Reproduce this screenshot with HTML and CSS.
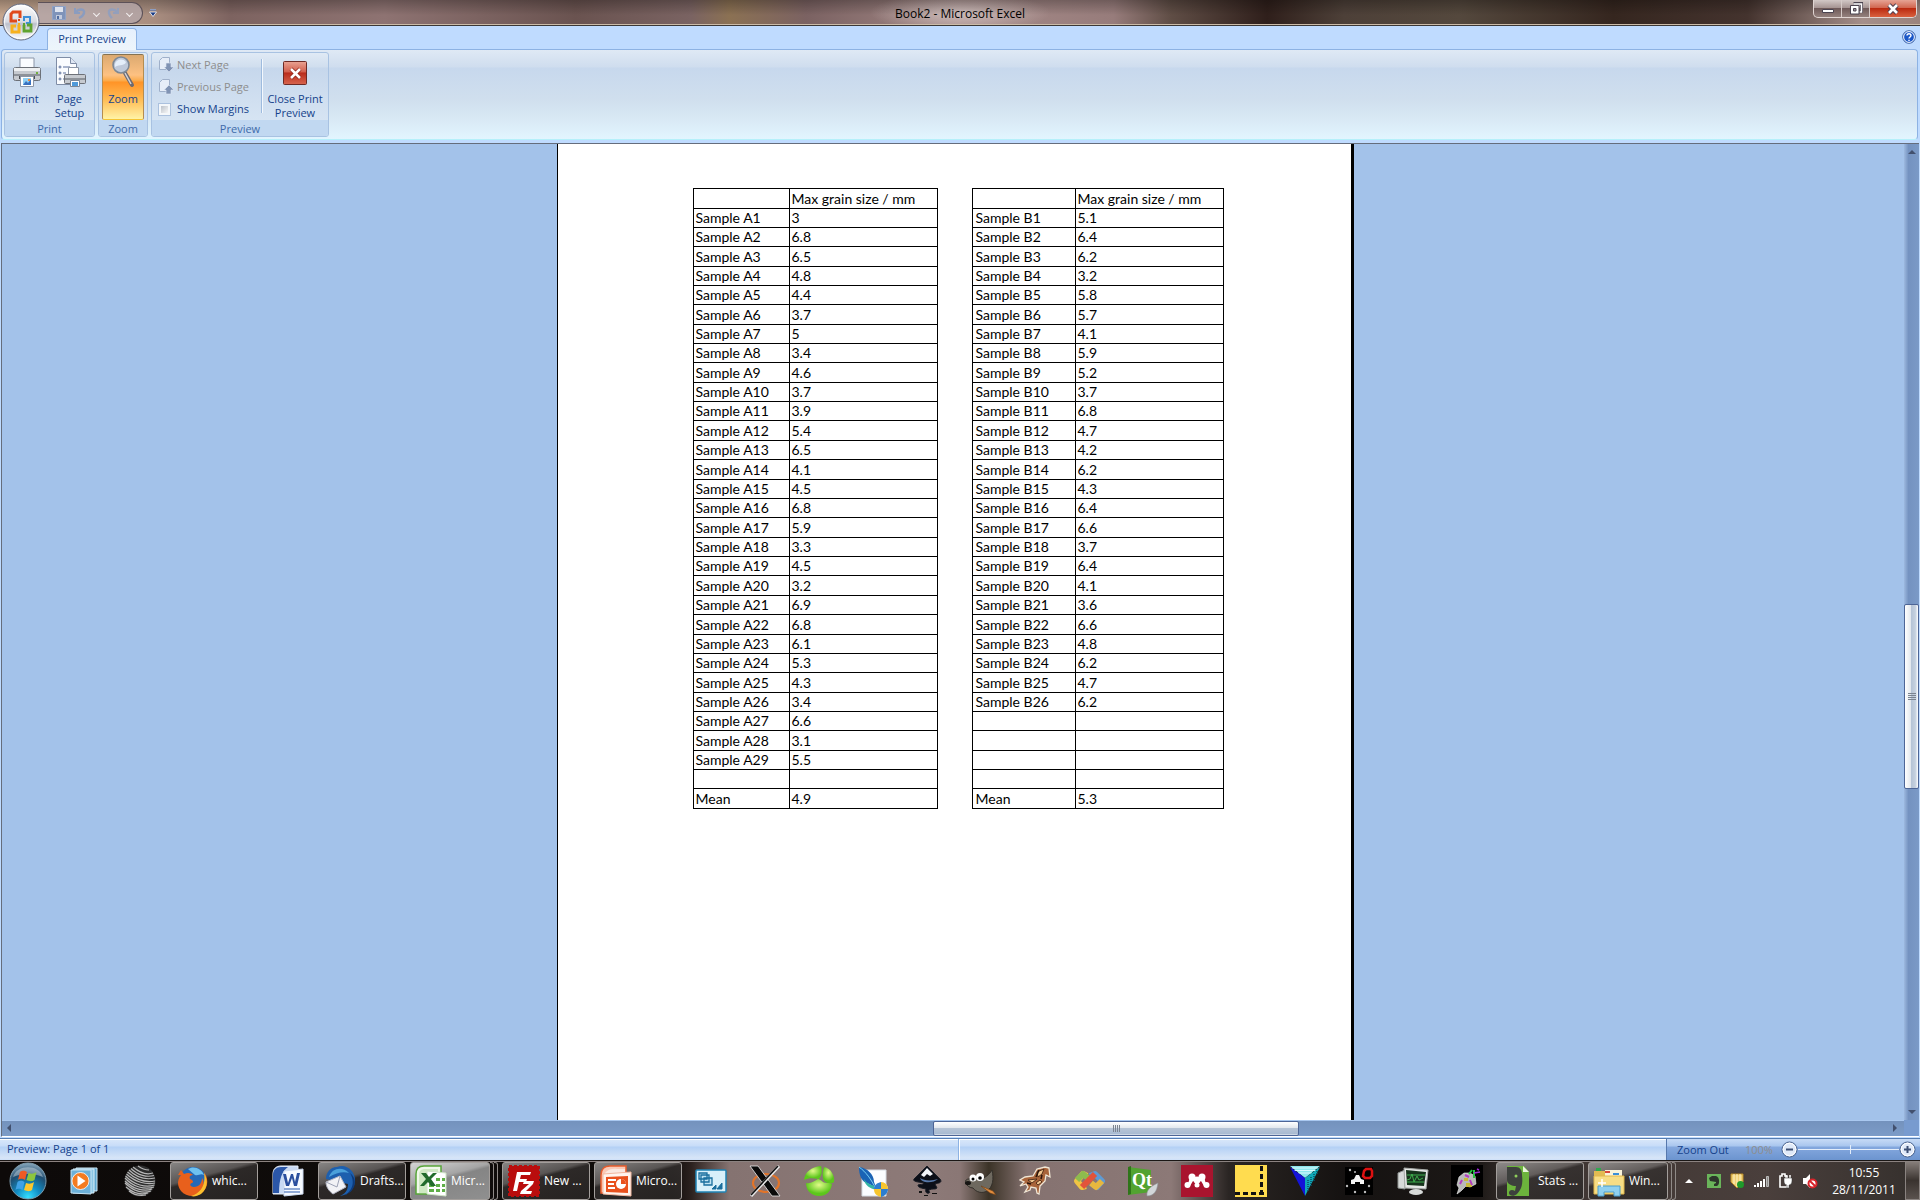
FILE: index.html
```html
<!DOCTYPE html>
<html lang="en">
<head>
<meta charset="utf-8">
<title>Book2 - Microsoft Excel</title>
<link rel="stylesheet" href="styles.css">
</head>
<body>
<header class="titlebar">
  <button class="office" aria-label="Office menu">
    <svg viewBox="0 0 38 38"><defs><linearGradient id="orb" x2="0" y2="1"><stop stop-color="#fff"/><stop offset=".5" stop-color="#d8dbe2"/><stop offset=".55" stop-color="#bcc0cc"/><stop offset="1" stop-color="#fff"/></linearGradient></defs>
    <circle cx="19" cy="19" r="18" fill="url(#orb)" stroke="#626a80"/><circle cx="19" cy="19" r="16.5" fill="none" stroke="#fff" opacity=".8"/>
    <g fill="none" stroke-width="3"><path d="M18 15V9h-7l-2 2v7h6" stroke="#e0481b"/><path d="M22 17v-3h6v6h-4" stroke="#3b8fd8" stroke-width="2"/><path d="M17 22v7h-7v-6h4" stroke="#f7b11d"/><path d="M22 22v6h7v-6h-4" stroke="#5fa32f" stroke-width="2.8"/></g>
    <path d="M16 16h2v2h-2z" fill="#e0481b"/><path d="M21 16h2v2h-2z" fill="#3b8fd8"/><path d="M16 20h2v2h-2z" fill="#f7b11d"/><path d="M21 20h2v2h-2z" fill="#5fa32f"/></svg>
  </button>
  <div class="quick">
    <button aria-label="Save"><svg width="14" height="14" viewBox="0 0 14 14"><path d="M.5.5h13v13h-13z" fill="#7f93b9" stroke="#8fa2c6"/><path d="M3 1h8v5H3z" fill="#dfe4ef"/><path d="M4 9h6v4H4z" fill="#c3cbdd"/><path d="M5 10h2v3H5z" fill="#536da0"/></svg></button>
    <button aria-label="Undo"><svg width="14" height="14" viewBox="0 0 14 14"><path d="M2 2v5h5" fill="none" stroke="#8b9cbf" stroke-width="2"/><path d="M3 6c3-4 9-3 8 1-.5 3-3 4-5 5" fill="none" stroke="#8b9cbf" stroke-width="2.4"/></svg></button>
    <span class="chev"></span>
    <button aria-label="Redo"><svg width="14" height="14" viewBox="0 0 14 14"><path d="M12 2v5H7" fill="none" stroke="#939fbc" stroke-width="2"/><path d="M11 6C8 2 2 3 3 7c.5 3 2 4 3 5" fill="none" stroke="#939fbc" stroke-width="2.4"/></svg></button>
    <span class="chev"></span>
  </div>
  <button class="customize" aria-label="Customize toolbar"><svg width="8" height="8" viewBox="0 0 8 8"><path d="M1 .5h6" stroke="#fff" stroke-width="2"/><path d="M1 1h6" stroke="#1d3f86"/><path d="M.5 3h7L4 7.5z" fill="#1d3f86" stroke="#fff" stroke-width=".8"/></svg></button>
  <h1>Book2 - Microsoft Excel</h1>
  <div class="winbtns">
    <button aria-label="Minimize"><svg width="14" height="12" viewBox="0 0 14 12"><path d="M1.500 6.500h11v3h-11z" fill="#fff" stroke="#4b4450"/></svg></button>
    <button aria-label="Restore"><svg width="14" height="14" viewBox="0 0 14 14"><path d="M4.500 1.500h8v8h-2" fill="none" stroke="#4b4450" stroke-width="3"/><path d="M4.500 2h8v8h-2" fill="none" stroke="#fff" stroke-width="1.500"/><path d="M1.500 3.500h8.500v8.500H1.500z" fill="#fff" stroke="#4b4450"/><path d="M4.500 6.500h2.500v2.500H4.500z" fill="#9a9096" stroke="#4b4450"/></svg></button>
    <button class="close" aria-label="Close"><svg width="14" height="12" viewBox="0 0 14 12"><path d="M3 2l8 8M11 2l-8 8" stroke="#514050" stroke-width="4.600"/><path d="M3 2l8 8M11 2l-8 8" stroke="#fff" stroke-width="2.600"/></svg></button>
  </div>
</header>

<nav class="tabs">
  <button class="tab">Print Preview</button>
  <button class="help" aria-label="Help"><svg width="14" height="14" viewBox="0 0 14 14"><circle cx="7" cy="7" r="6.300" fill="#1c58c8" stroke="#4b6ea8"/><circle cx="7" cy="7" r="5.400" fill="none" stroke="#fff"/><path d="M5 5.600c0-2.400 4-2.400 4 0C9 7 7 7 7 8.600M7 9.800v1.200" fill="none" stroke="#fff" stroke-width="1.400"/></svg></button>
</nav>

<section class="ribbon">
  <div class="group g-print">
    <div class="body">
      <button class="big"><svg width="32" height="32" viewBox="0 0 32 32"><path d="M9 2h14v12H9z" fill="#fafcff" stroke="#8b96a8"/><rect x="2.500" y="11.500" width="27" height="13" rx="2" fill="#c6cad0" stroke="#6d7178"/><path d="M3 12h26v3H3z" fill="#eef0f2"/><path d="M3 18h26v2H3z" fill="#8d9299"/><path d="M8 20h16v3H8z" fill="#4b4e54"/><path d="M9.500 20.500h13v10h-13z" fill="#fff" stroke="#8b96a8"/><path d="M12 22h8v7h-8z" fill="#8fd0f4"/><path d="M12 29l3-4 2 2 3-4v6z" fill="#3971c0"/><path d="M17 23h2v2h-2z" fill="#f08a3c"/><path d="M25 16h2v2h-2z" fill="#6fae3c"/></svg><span>Print</span></button>
      <button class="big"><svg width="32" height="32" viewBox="0 0 32 32"><path d="M2.500 1.500h14l6 6v21h-20z" fill="#fafcff" stroke="#7f8da6"/><path d="M16.500 1.500v6h6" fill="#dfe7f4" stroke="#7f8da6"/><g fill="none" stroke="#5a6f9c"><circle cx="6" cy="11" r="1"/><circle cx="6" cy="17" r="1"/><circle cx="6" cy="23" r="1"/><path d="M9 11h7M9 17h3M9 23h2"/></g><path d="M14.500 11.500h10v8h-10z" fill="#fff" stroke="#8b96a8"/><rect x="10.500" y="18.500" width="21" height="9" rx="1" fill="#c6cad0" stroke="#6d7178"/><path d="M11 22h20v2H11z" fill="#8d9299"/><path d="M16.500 24.500h9v6h-9z" fill="#fff" stroke="#7c8796"/><path d="M18 26h6v4h-6z" fill="#4f9ada"/></svg><span>Page<br>Setup</span></button>
    </div>
    <h2>Print</h2>
  </div>
  <div class="group g-zoom">
    <div class="body">
      <button class="big on"><svg width="32" height="32" viewBox="0 0 32 32"><path d="M18 17l7 12" stroke="#6e6a70" stroke-width="4" stroke-linecap="round"/><path d="M18 17l6 11" stroke="#d5d5da" stroke-width="1.500"/><circle cx="14" cy="9" r="8" fill="#b9cbe4" fill-opacity=".9" stroke="#7e8894" stroke-width="1.600"/><path d="M8 8c1-5 8-6 11-2-1 4-6 2-11 5z" fill="#e4eefa"/></svg><span>Zoom</span></button>
    </div>
    <h2>Zoom</h2>
  </div>
  <div class="group g-preview">
    <div class="body">
      <div class="stack">
        <button class="small" disabled><svg width="16" height="16" viewBox="0 0 16 16"><path d="M1.500 3.500l3-3h7v12h-10z" fill="#e6edf8" stroke="#9fb0ca"/><path d="M8 6h5v4h3l-5 5-5-5h2z" fill="#8093b4" stroke="#dfe8f5" stroke-width=".6"/></svg>Next Page</button>
        <button class="small" disabled><svg width="16" height="16" viewBox="0 0 16 16"><path d="M1.500 3.500l3-3h7v12h-10z" fill="#e6edf8" stroke="#9fb0ca"/><path d="M8 15h5v-4h3l-5-5-5 5h2z" fill="#8093b4" stroke="#dfe8f5" stroke-width=".6"/></svg>Previous Page</button>
        <label class="small"><input type="checkbox">Show Margins</label>
      </div>
      <button class="big closeprev"><svg width="32" height="32" viewBox="0 3 32 32"><defs><linearGradient id="red" x2="0" y2="1"><stop stop-color="#e9a393"/><stop offset=".45" stop-color="#d2604e"/><stop offset=".5" stop-color="#b92c1c"/><stop offset="1" stop-color="#d8654e"/></linearGradient></defs><rect x="4.500" y="5.500" width="23" height="23" rx="1" fill="url(#red)" stroke="#6d2a25"/><path d="M12 13l9 9M21 13l-9 9" stroke="#8d2015" stroke-width="4"/><path d="M12 13l9 9M21 13l-9 9" stroke="#fff" stroke-width="2.600"/></svg><span>Close Print<br>Preview</span></button>
    </div>
    <h2>Preview</h2>
  </div>
</section>

<main class="preview">
  <div class="canvas">
    <div class="paper">
      <table class="sheet sheet-a">
        <thead><tr><th></th><th>Max grain size / mm</th></tr></thead>
        <tbody>
        <tr><td>Sample A1</td><td>3</td></tr>
        <tr><td>Sample A2</td><td>6.8</td></tr>
        <tr><td>Sample A3</td><td>6.5</td></tr>
        <tr><td>Sample A4</td><td>4.8</td></tr>
        <tr><td>Sample A5</td><td>4.4</td></tr>
        <tr><td>Sample A6</td><td>3.7</td></tr>
        <tr><td>Sample A7</td><td>5</td></tr>
        <tr><td>Sample A8</td><td>3.4</td></tr>
        <tr><td>Sample A9</td><td>4.6</td></tr>
        <tr><td>Sample A10</td><td>3.7</td></tr>
        <tr><td>Sample A11</td><td>3.9</td></tr>
        <tr><td>Sample A12</td><td>5.4</td></tr>
        <tr><td>Sample A13</td><td>6.5</td></tr>
        <tr><td>Sample A14</td><td>4.1</td></tr>
        <tr><td>Sample A15</td><td>4.5</td></tr>
        <tr><td>Sample A16</td><td>6.8</td></tr>
        <tr><td>Sample A17</td><td>5.9</td></tr>
        <tr><td>Sample A18</td><td>3.3</td></tr>
        <tr><td>Sample A19</td><td>4.5</td></tr>
        <tr><td>Sample A20</td><td>3.2</td></tr>
        <tr><td>Sample A21</td><td>6.9</td></tr>
        <tr><td>Sample A22</td><td>6.8</td></tr>
        <tr><td>Sample A23</td><td>6.1</td></tr>
        <tr><td>Sample A24</td><td>5.3</td></tr>
        <tr><td>Sample A25</td><td>4.3</td></tr>
        <tr><td>Sample A26</td><td>3.4</td></tr>
        <tr><td>Sample A27</td><td>6.6</td></tr>
        <tr><td>Sample A28</td><td>3.1</td></tr>
        <tr><td>Sample A29</td><td>5.5</td></tr>
        <tr><td></td><td></td></tr>
        <tr><td>Mean</td><td>4.9</td></tr>
        </tbody>
      </table>
      <table class="sheet sheet-b">
        <thead><tr><th></th><th>Max grain size / mm</th></tr></thead>
        <tbody>
        <tr><td>Sample B1</td><td>5.1</td></tr>
        <tr><td>Sample B2</td><td>6.4</td></tr>
        <tr><td>Sample B3</td><td>6.2</td></tr>
        <tr><td>Sample B4</td><td>3.2</td></tr>
        <tr><td>Sample B5</td><td>5.8</td></tr>
        <tr><td>Sample B6</td><td>5.7</td></tr>
        <tr><td>Sample B7</td><td>4.1</td></tr>
        <tr><td>Sample B8</td><td>5.9</td></tr>
        <tr><td>Sample B9</td><td>5.2</td></tr>
        <tr><td>Sample B10</td><td>3.7</td></tr>
        <tr><td>Sample B11</td><td>6.8</td></tr>
        <tr><td>Sample B12</td><td>4.7</td></tr>
        <tr><td>Sample B13</td><td>4.2</td></tr>
        <tr><td>Sample B14</td><td>6.2</td></tr>
        <tr><td>Sample B15</td><td>4.3</td></tr>
        <tr><td>Sample B16</td><td>6.4</td></tr>
        <tr><td>Sample B17</td><td>6.6</td></tr>
        <tr><td>Sample B18</td><td>3.7</td></tr>
        <tr><td>Sample B19</td><td>6.4</td></tr>
        <tr><td>Sample B20</td><td>4.1</td></tr>
        <tr><td>Sample B21</td><td>3.6</td></tr>
        <tr><td>Sample B22</td><td>6.6</td></tr>
        <tr><td>Sample B23</td><td>4.8</td></tr>
        <tr><td>Sample B24</td><td>6.2</td></tr>
        <tr><td>Sample B25</td><td>4.7</td></tr>
        <tr><td>Sample B26</td><td>6.2</td></tr>
        <tr><td></td><td></td></tr>
        <tr><td></td><td></td></tr>
        <tr><td></td><td></td></tr>
        <tr><td></td><td></td></tr>
        <tr><td>Mean</td><td>5.3</td></tr>
        </tbody>
      </table>
    </div>
  </div>
  <div class="vbar"><i class="up"></i><span class="thumb"><b></b></span><i class="down"></i></div>
  <div class="hbar"><i class="left"></i><span class="thumb"><b></b></span><i class="right"></i></div>
  <div class="corner"></div>
</main>

<footer class="status">
  <p>Preview: Page 1 of 1</p>
  <p class="mid"></p>
  <div class="zoomer">
    <label for="zoom">Zoom Out</label>
    <output for="zoom">100%</output>
    <button aria-label="Zoom out"><svg width="17" height="17" viewBox="0 0 17 17"><circle cx="8.500" cy="8.500" r="7.500" fill="#dfe9f8" stroke="#48618c"/><circle cx="8.500" cy="8.500" r="6.300" fill="none" stroke="#fff"/><path d="M5 8.500h7" stroke="#3c4f74" stroke-width="2"/></svg></button>
    <input id="zoom" type="range" min="0" max="200" value="104">
    <button aria-label="Zoom in"><svg width="17" height="17" viewBox="0 0 17 17"><circle cx="8.500" cy="8.500" r="7.500" fill="#dfe9f8" stroke="#48618c"/><circle cx="8.500" cy="8.500" r="6.300" fill="none" stroke="#fff"/><path d="M5 8.500h7M8.500 5v7" stroke="#3c4f74" stroke-width="2"/></svg></button>
  </div>
</footer>

<nav class="taskbar">
  <button class="slot wide" aria-label="Start"><svg width="38" height="38" viewBox="0 0 38 38"><defs><radialGradient id="st" cx=".5" cy=".95" r=".95"><stop stop-color="#35e0ff"/><stop offset=".35" stop-color="#128dc4"/><stop offset=".7" stop-color="#1f4d70"/><stop offset="1" stop-color="#8aa9bd"/></radialGradient></defs><circle cx="19" cy="19" r="18" fill="url(#st)" stroke="#7d9cae"/><path d="M4 15C8 2 30 2 34 15c-9-4-21-4-30 0z" fill="#fff" opacity=".35"/><path d="M11 10c3-2 5-1 7 0l-2 8c-2-1-4-2-7 0z" fill="#ee5a24"/><path d="M19.500 11c3 1 5 1 8-1l-2 8c-3 2-5 1-8 0z" fill="#8cc63e"/><path d="M8.500 20c3-2 5-1 7 0l-2 8c-2-1-4-2-7 0z" fill="#3fa2e6"/><path d="M17 21c3 1 5 1 8-1l-2 8c-3 2-5 1-8 0z" fill="#fcc72d"/></svg></button>
  <button class="slot wide" aria-label="Media Player"><svg width="32" height="32" viewBox="0 0 32 32"><path d="M8 3h21v23H8z" fill="#5ea7cf" stroke="#cfe8f6"/><path d="M5 4h21v24H5z" fill="#8cc6e4" stroke="#d9eef9"/><path d="M3 5h20v24L3 28z" fill="#6cb0d8" stroke="#c6e3f3"/><circle cx="12.500" cy="16" r="8.500" fill="#f47b20" stroke="#fff" stroke-width=".8"/><path d="M9.500 10.500l8 5.500-8 5.500z" fill="#fff"/></svg></button>
  <button class="slot wide" aria-label="Sphere"><svg width="32" height="32" viewBox="0 0 32 32"><circle cx="16" cy="16" r="15.500" fill="#2c2c2c"/><g fill="none" stroke="#b5b5b5" stroke-width="1.200"><path d="M9 2c7 6 14 8 20 6M7 3.500c7 7 16 9 23 7M5 5c8 8 17 10 26 8M3.500 7c9 8 18 11 27.500 9M2.500 9C11 17 22 20 31 18M1.500 11c9 9 20 12 29 9M1 13c8 9 20 12 29 9M1 16c8 8 19 11 27 8M1 18c8 8 18 11 26 8M2 22c7 6 15 8 22 6M5 26c5 4 11 5 17 4M14 1c4 3 8 4 11 4"/></g></svg></button>
  <button class="app"><svg width="32" height="32" viewBox="0 0 32 32"><circle cx="17" cy="15" r="13" fill="#2569b8"/><path d="M12 4c6-4 14 0 16 6-4-2-5 1-9 0z" fill="#6fc1ef"/><path d="M2 10l3-5 3 4c4-2 7-1 9 1-3 0-4 2-3 4 3 1 4 3 2 4-3 1-2 4 2 4 5 0 8-4 8-9 2 3 2 5 1 7 2-2 3-7 1-13 5 7 4 15-1 20-6 6-17 5-22-1-4-5-4-11 0-16z" fill="#e8601c"/><path d="M28 8c5 8 3 16-3 21-4 2-7 3-10 2 10-3 15-11 13-23z" fill="#fbc02e"/></svg><span>whic...</span></button>
  <button class="slot wide" aria-label="Word"><svg width="32" height="32" viewBox="0 0 32 32"><path d="M1 29V9c0-5 3-8 8-8h17v28z" fill="#c9daf4" stroke="#e8f0fb"/><path d="M1 28V10c0-5 3-8 8-8h7c-6 4-9 12-9 26z" fill="#2b57a8"/><path d="M12 6l19-2v25l-19 2z" fill="#f7faff" stroke="#cbd8ee"/><path d="M11 9h3l2 9 3-9h2l2 8 2-9h3l-3 13h-3l-2-8-3 8h-3z" fill="#2b4f9e"/><path d="M12 24h16M12 27h16" stroke="#6f8ec8" stroke-width="1.500"/></svg></button>
  <button class="app"><svg width="32" height="32" viewBox="0 0 32 32"><path d="M2 14C2 8 6 2 13 2c9-4 18 4 18 13 0 8-6 15-15 16 7-3 8-8 8-12z" fill="#1d5fae"/><path d="M5 12C8 3 18 1 25 8c-6-2-13 0-20 4z" fill="#4aa0da"/><path d="M26 8c5 8 3 17-5 22 11-4 13-16 5-22z" fill="#0d3b7c"/><path d="M2 17l14-6 6 11-13 7c-4-3-7-7-7-12z" fill="#f2f2f5" stroke="#b5b8c6"/><path d="M2 17l11 5 3-11" fill="none" stroke="#9da2b5"/></svg><span>Drafts...</span></button>
  <div class="pile"><button class="app active"><svg width="32" height="32" viewBox="0 0 32 32"><path d="M1 29V9c0-5 3-8 8-8h17v28z" fill="#f0f8ea" stroke="#58a53a" stroke-width="1.500"/><path d="M4 28V10c0-4 2-6 6-6h13v24z" fill="#cfe9c2"/><path d="M12 6l19 2v23l-19-2z" fill="#fff" stroke="#cfe2c6"/><path d="M14 19h5v3h-5zM21 19h4v3h-4zM27 19h3v3h-3zM14 24h5v3h-5zM21 24h4v3h-4zM27 24h3v3h-3zM21 13h4v3h-4zM27 13h3v3h-3z" fill="#5eae46"/><path d="M6 8h5l3 4 4-4h4l-6 6 5 7h-5l-3-4-4 4H5l6-7z" fill="#226b2c"/></svg><span>Micr...</span></button><i></i><i></i></div>
  <button class="app"><svg width="32" height="32" viewBox="0 0 32 32"><path d="M1 1h30v30H1z" fill="#b90d0d" stroke="#b90d0d" stroke-width="2" stroke-dasharray="3 2"/><path d="M9 7h14l-1 3h-9l-1 4h7l-1 3h-7l-2 9H5zM16 16h10l-1 3-7 7h6l-1 3H12l1-3 8-7h-6z" fill="#fff"/></svg><span>New ...</span></button>
  <button class="app"><svg width="32" height="32" viewBox="0 0 32 32"><path d="M1 28V10c0-5 3-9 9-9h16v27z" fill="#f9c9b6" stroke="#e85c2c" stroke-width="1.500"/><path d="M3 12c2-6 7-9 14-8h8v8z" fill="#fae8e0"/><path d="M3 9l28-2v24L3 29z" fill="#fff4ee" stroke="#f2b79f"/><path d="M6 12l22-1v17L6 27z" fill="#e9511d"/><path d="M8 15h8M8 19h6M8 23h7" stroke="#fff" stroke-width="1.800"/><circle cx="21" cy="19" r="5" fill="#fff"/><path d="M21 19v-5a5 5 0 015 5z" fill="#e9511d"/></svg><span>Micro...</span></button>
  <button class="slot" aria-label="Desktop tool"><svg width="32" height="32" viewBox="0 0 32 32"><rect x="1" y="5" width="30" height="22" rx="1" fill="#d8f0fa" stroke="#1f83b4" stroke-width="1.500"/><g fill="#bfe3f3" stroke="#1a6f9e" stroke-width="1.300"><path d="M4 8h8v6H4zM6 10h8v7H6zM9 13h8v7H9z"/></g><path d="M17 24l4-4v4zM22 24l5-6v6z" fill="#1a6f9e" stroke="#1a6f9e"/></svg></button>
  <button class="slot" aria-label="X server"><svg width="32" height="32" viewBox="0 0 32 32"><ellipse cx="17" cy="18" rx="13" ry="9" fill="none" stroke="#e27429" stroke-width="2.200"/><path d="M1 1h8l22 30h-8z" fill="#0a0a0a" stroke="#e9e9e9" stroke-width=".8"/><path d="M30 1L2 31" stroke="#e9e9e9" stroke-width="3"/><path d="M29 1L2 30" stroke="#111" stroke-width="1.600"/></svg></button>
  <button class="slot" aria-label="Green app"><svg width="32" height="32" viewBox="0 0 32 32"><defs><radialGradient id="gr" cx=".5" cy=".35"><stop stop-color="#e2fa8a"/><stop offset="1" stop-color="#5cc71c"/></radialGradient></defs><path d="M1 15C2 7 8 2 18 1c2 6 0 12-3 13-5-1-10-1-14 1z" fill="url(#gr)"/><path d="M21 2c7 1 11 9 10 15-4 3-10 1-11-4-1-4 0-8 1-11z" fill="url(#gr)"/><path d="M3 18c5 1 8-2 12-4 3 0 4 4 9 4 2 0 4 0 5 1-1 8-6 12-13 12S3 26 3 18z" fill="url(#gr)"/></svg></button>
  <button class="slot" aria-label="Feather app"><svg width="32" height="32" viewBox="0 0 32 32"><path d="M5 5h24v26H5z" fill="#fbfdff" stroke="#d5dbe2"/><path d="M2 2c8 1 15 7 15 15l3 8c-3-3-5-5-8-6C4 17 2 10 2 2z" fill="#1a63b5"/><path d="M2 2c7 5 12 12 17 22" fill="none" stroke="#79d1f5"/><path d="M7 14c2 4 6 5 10 7l2 4c-6-2-11-4-12-11z" fill="#32b5a4"/><circle cx="24" cy="24" r="7" fill="#fff"/><path d="M24 17v7h-7c0-4 3-6 7-7zM24 24h7c0 4-3 7-7 8z" fill="#2c7ed0"/><path d="M24 17v7h7c0-4-3-7-7-7zM24 24h-7c0 5 3 7 7 8z" fill="#f7c52d"/></svg></button>
  <button class="slot" aria-label="Inkscape"><svg width="32" height="32" viewBox="0 0 32 32"><path d="M16 1L29 14c3 4-2 4-5 5l2 4c-2 2-5 0-8 2-1 1 2 2 0 3-3 1-4-2-3-4-4-1-8-1-8-4 2-1 5 0 6-2-4-1-12-1-10-4z" fill="#0c0f18" stroke="#1a1d26"/><path d="M16 3l6 6-3 2-3-2-3 3-3-2z" fill="#f2f5fa"/><path d="M9 13c4 3 12 3 18 1-4 4-16 5-18-1z" fill="#5777a8"/><path d="M8 26h3v2H8zM21 28h5v1h-5zM13 30h4v1h-4z" fill="#111"/></svg></button>
  <button class="slot" aria-label="GIMP"><svg width="32" height="32" viewBox="0 0 32 32"><path d="M4 14c4-3 7-2 11 0 5-1 9-4 12-9 2 9 1 17-5 21-5 3-11 1-14-3-4 0-6-3-8-5 0-3 2-4 4-4z" fill="#6e695f" stroke="#34302b"/><circle cx="8" cy="13" r="3.500" fill="#fff"/><circle cx="15" cy="12" r="4" fill="#fff"/><circle cx="8" cy="14" r="1.500"/><circle cx="15" cy="13" r="1.800"/><ellipse cx="3" cy="18" rx="3" ry="2" fill="#171513"/><path d="M16 21l12 5 3 4-6-2z" fill="#e08b3c" stroke="#6c3e17" stroke-width=".6"/></svg></button>
  <button class="slot" aria-label="Horse app"><svg width="32" height="32" viewBox="0 0 32 32"><path d="M30 3l-4-1-8 2-4 7-8 1-5 3 4 2-4 4 6-2 2 3-3 5 5-2 1-3 5 1 1 5 2 1 1-8 5-5 1-6 4 2z" fill="#a8643a" stroke="#f0e6d5" stroke-width="1.300"/><path d="M18 7l7-3-2 5-4 3zM9 15l9-1-5 4zM17 18l4-3 2 2-4 3z" fill="#f0c58e" stroke="#3b1c0c" stroke-width=".8"/><path d="M20 5l-3 7M8 18l4 1M23 10l-1 4" stroke="#2a140b" stroke-width="1.500"/></svg></button>
  <button class="slot" aria-label="Knot app"><svg width="32" height="32" viewBox="0 0 32 32"><g fill="none" stroke-width="6" stroke-linejoin="round"><path d="M14 11l-4-2-6 7 5 6 4-1" stroke="#efc443"/><path d="M17 11l5-2 7 7-5 6-5-3" stroke="#5f9ad4"/><path d="M4 15l6-6 5 4" stroke="#8dbb4e"/><path d="M29 16l-6 6-5-4" stroke="#e7b73e"/><path d="M9 22L22 9" stroke="#e2543a"/></g></svg></button>
  <button class="slot" aria-label="Qt Creator"><svg width="32" height="32" viewBox="0 0 32 32"><path d="M1 2l23 3v22L1 30z" fill="#52a331"/><path d="M1 2l3-1v28l-3 1z" fill="#2f7519"/><text x="5" y="21" class="qt">Qt</text><path d="M31 18c-1 8-4 13-11 13-1-6 4-10 11-13z" fill="#d2d6d9" stroke="#8f9498" stroke-width=".6"/></svg></button>
  <button class="slot" aria-label="Mendeley"><svg width="32" height="32" viewBox="0 0 32 32"><path d="M0 0h32v32H0z" fill="#a9142e"/><g fill="#fff"><circle cx="11" cy="12" r="3.500"/><circle cx="21" cy="12" r="3.500"/><circle cx="16" cy="15" r="3.500"/><circle cx="6.500" cy="20" r="3"/><circle cx="16" cy="20" r="2.500"/><circle cx="25.500" cy="20" r="3"/><path d="M9 12h4l3 3 3-3h4l2 7-2 2-3-5-4 2-4-2-3 5-2-2z"/></g></svg></button>
  <button class="slot" aria-label="Yellow app"><svg width="32" height="32" viewBox="0 0 32 32"><path d="M0 0h32v32H0z" fill="#ffdc4f"/><path d="M26.500 1v31M0 28.500h32" stroke="#111" stroke-width="3" stroke-dasharray="5 3"/></svg></button>
  <button class="slot" aria-label="Prism app"><svg width="32" height="32" viewBox="0 0 32 32"><path d="M1 1h30L16 13z" fill="#8de8ee"/><path d="M3 3h26M5 5.500h22M9 8h14" stroke="#d9fbff"/><path d="M1 2l15 11v18z" fill="#1414d8"/><path d="M31 2L16 13v18z" fill="#10a9b8"/><path d="M28 6v4M25 9v7M22 12v10M19 15v11" stroke="#0a4f63" stroke-width="1.500" stroke-dasharray="1 1"/></svg></button>
  <button class="slot" aria-label="Space app"><svg width="32" height="32" viewBox="0 0 32 32"><path d="M2 2h28v28H2z" fill="#000"/><path d="M8 19v-4l3-1 2-4h3l2 4 3 1v4h-4v-2h-5v2z" fill="#f4f4f4"/><g fill="#bbb"><circle cx="7" cy="5" r="1.200"/><circle cx="12" cy="7" r="1"/><circle cx="4" cy="21" r="1.200"/><circle cx="26" cy="21" r="1.200"/><circle cx="12" cy="27" r="1.200"/><circle cx="22" cy="27" r="1.200"/></g><path d="M21 6l2-2h5l1 2v5l-2 2h-5l-2-2z" fill="none" stroke="#d11" stroke-width="2.500"/></svg></button>
  <button class="slot" aria-label="Monitor app"><svg width="32" height="32" viewBox="0 0 32 32"><path d="M1 8l7-3v19l-7-1z" fill="#d7dad9" stroke="#8f9492"/><path d="M7 3l24 2-2 19-21-1z" fill="#e6e8e6" stroke="#a4a8a5"/><path d="M9 5l20 2-2 14-17-1z" fill="#17331c"/><path d="M10 15l3-1 2-5 2 8 3-6 2 4 4-2M10 10h18M10 17h17" fill="none" stroke="#3fae4c"/><ellipse cx="19" cy="27" rx="7" ry="3" fill="#d7dad9"/></svg></button>
  <button class="slot" aria-label="Creature app"><svg width="32" height="32" viewBox="0 0 32 32"><path d="M0 0h32v32H0z" fill="#000"/><path d="M6 29l2-6-2-3 2-8 5-4h6l5 3 1 8-6 3-4-1-5 5z" fill="#b9b9b9" stroke="#eee" stroke-width=".6"/><path d="M13 13h4v3h-4zM15 18h6v4h-6z" fill="#c7b93a"/><path d="M14 10l4 2M11 15l-2 4M19 15l2 5" stroke="#b23cc0" stroke-width="2"/><path d="M18 9l3-4M23 5v8" stroke="#26c440" stroke-width="2"/><path d="M23 8l6-1M26 4l2 1" stroke="#9c2bd0" stroke-width="1.500"/></svg></button>
  <button class="app"><svg width="32" height="32" viewBox="0 0 32 32"><path d="M5 1h17l5 6v24H5z" fill="#6cb33c"/><path d="M21 1l6 6h-6z" fill="#e8f5dc"/><path d="M5 2h9c4 0 6 3 6 8 1 8 0 14-5 19-3 3-8 2-8-1s3-4 6-2l1-5c-4 0-9-2-9-6z" fill="#3d403d"/><circle cx="14" cy="11" r="1.500" fill="#8fcf5b"/></svg><span>Stats ...</span></button>
  <div class="pile"><button class="app"><svg width="32" height="32" viewBox="0 0 32 32"><path d="M1 6h11l2 2h14v20H1z" fill="#e2bb52"/><path d="M12 5h17v6H12z" fill="#f9f3da"/><path d="M3 3h5v3H3z" fill="#2fa84f"/><path d="M12 6h5v2h-5z" fill="#d8473b"/><path d="M20 8h6v2h-6z" fill="#3b8fd8"/><path d="M1 11h30v18H1z" fill="#f7dd85" stroke="#e1b84c"/><path d="M5 31V21h22v10h-6v-4H11v4z" fill="#8fd0ef" stroke="#4b9ccb"/><path d="M9 14v8M5 18h8" stroke="#fff" stroke-width="1.500"/></svg><span>Win...</span></button><i></i><i></i></div>
  <div class="tray">
    <button aria-label="Show hidden icons"><svg width="8" height="6" viewBox="0 0 8 6"><path d="M0 5l4-4 4 4z" fill="#fff"/></svg></button>
    <button aria-label="Evernote"><svg width="14" height="14" viewBox="0 0 14 14"><path d="M0 0h14v14H0z" fill="#6ab45a"/><path d="M2 4l3-2h4c4 1 4 9 1 10H7v-2l2-1V8L3 7z" fill="#2d352b"/></svg></button>
    <button aria-label="Shield"><svg width="15" height="16" viewBox="0 0 15 16"><path d="M1 1h12v8l-6 6-6-6z" fill="#f0cf73" stroke="#b98b27"/><path d="M4 1v10M7 1v13M10 1v8" stroke="#fff3c8"/><circle cx="10.500" cy="11.500" r="3.500" fill="#1f9a2b"/></svg></button>
    <button aria-label="Network"><svg width="16" height="12" viewBox="0 0 16 12"><path d="M0 10h2v2H0zM3 8h2v4H3zM6 6h2v6H6zM9 4h2v8H9z" fill="#fff"/><path d="M12.500 1.500h2v10h-2z" fill="#8f8c88" stroke="#bbb"/></svg></button>
    <button aria-label="Power"><svg width="14" height="16" viewBox="0 0 14 16"><path d="M1 3h2V1h3v2h2v11H1z" fill="none" stroke="#fff" stroke-width="1.600"/><path d="M7 2v4M11 2v4" stroke="#fff" stroke-width="1.500"/><path d="M5 5h8v3c0 3-2 4-3 4v3H8v-3c-2 0-3-2-3-4z" fill="#fff" stroke="#333" stroke-width=".5"/></svg></button>
    <button aria-label="Volume muted"><svg width="16" height="16" viewBox="0 0 16 16"><path d="M1 5h3l4-4v14l-4-4H1z" fill="#fff"/><circle cx="10.500" cy="10.500" r="4" fill="#fff" stroke="#d8232a" stroke-width="2"/><path d="M8 8l5 5" stroke="#d8232a" stroke-width="2"/></svg></button>
    <time datetime="2011-11-28T10:55">10:55<br>28/11/2011</time>
    <button class="desktop" aria-label="Show desktop"></button>
  </div>
</nav>
</body>
</html>
```
FILE: styles.css
```css
* { box-sizing: border-box; }

html, body { height: 100%; }

body {
  margin: 0;
  display: flex;
  flex-direction: column;
  overflow: hidden;
  background: #bfdbff;
  color: #15428b;
  font: 11px/16px "Open Sans", "Noto Sans", sans-serif;
}

button {
  padding: 0;
  border: 0;
  background: none;
  color: inherit;
  font: inherit;
}

svg { display: block; flex: none; }
h1, h2, p { margin: 0; font-weight: 400; font-size: inherit; }

/* Title bar */
.titlebar {
  position: relative;
  flex: none;
  display: flex;
  align-items: flex-start;
  height: 26px;
  padding-left: 38px;
  border-bottom: 1px solid #3c3836;
  box-shadow: inset 0 -1px #cbbba8;
  background:
    linear-gradient(#0004, #0000 60%),
    radial-gradient(ellipse 90px 20px at 50% 50%, #cdbcba, #cdbcba00),
    linear-gradient(90deg, #c5a68e 0, #a98e80 8%, #7d6360 12%, #8e7372 20%, #6a5350 30%, #7a6362 36%, #8b7153 38%, #7b6262 42%, #a58a88 50%, #977c7b 58%, #5f4d45 61%, #2f1f1b 66%, #4d4038 70%, #54483d 76%, #35261f 84%, #44332e 91%, #a58f8a 97%, #9a837d);
}
.office {
  position: absolute;
  left: 2px;
  top: 3px;
  width: 38px;
  height: 38px;
  z-index: 2;
}
.quick {
  display: flex;
  align-items: center;
  gap: 7px;
  height: 22px;
  margin-top: 2px;
  padding: 0 10px 0 14px;
  border: 1px solid #5c5158;
  border-left: 0;
  border-radius: 0 11px 11px 0;
  background: #b5a7aacc;
}
.chev {
  width: 5px;
  height: 5px;
  border: solid #f4f0f0;
  border-width: 0 1px 1px 0;
  transform: rotate(45deg);
}
.customize { margin: 9px 0 0 6px; }
.titlebar h1 {
  position: absolute;
  inset: 6px 0 auto;
  text-align: center;
  color: #000;
  font-size: 12px;
}
.winbtns {
  position: relative;
  display: flex;
  height: 18px;
  margin: 0 3px 0 auto;
  border: 1px solid #e0d5d2;
  border-top: 0;
  border-radius: 0 0 5px 5px;
  background: linear-gradient(#d2c8c6, #a3918f 48%, #6f5a59 50%, #94817d);
  overflow: hidden;
}
.winbtns button {
  display: grid;
  place-items: center;
  width: 28px;
  border-right: 1px solid #d6cbc8;
}
.winbtns .close {
  width: 46px;
  border: 0;
  background: linear-gradient(#e6a394, #d0634c 48%, #bb2a10 50%, #d9603e);
}

/* Tabs */
.tabs {
  flex: none;
  display: flex;
  justify-content: space-between;
  height: 23px;
  padding: 2px 4px 0 47px;
}
.tab {
  position: relative;
  width: 90px;
  height: 22px;
  padding-bottom: 2px;
  border: 1px solid #8db2e3;
  border-bottom: 0;
  border-radius: 4px 4px 0 0;
  background: linear-gradient(#e6f0fd, #edf5fb);
  z-index: 1;
}
.help { height: 17px; }

/* Ribbon */
.ribbon {
  flex: none;
  display: flex;
  gap: 3px;
  height: 91px;
  margin: 0 2px 3px 1px;
  padding: 2px;
  border: 1px solid #8db2e3;
  border-bottom-color: #b5f0fa;
  border-radius: 4px;
  background: linear-gradient(#dfe9f5, #cfddee 17px, #c7d8ed 18px, #d0dfee 50px, #d8e8f4 68px, #e2f5ff);
}
.group {
  display: flex;
  flex-direction: column;
  border: 1px solid #a8c2e2;
  border-radius: 3px;
  background: linear-gradient(#e0eaf5, #d0deee 14px, #c6d7ec 15px, #dbe8f5);
  overflow: hidden;
}
.body { flex: 1; min-height: 0; display: flex; }
.group h2 {
  flex: none;
  height: 16px;
  line-height: 17px;
  text-align: center;
  background: #c1d8f1;
  color: #3e6aaa;
}
.g-print { width: 91px; }
.g-zoom { width: 50px; }
.g-preview { width: 178px; }
.big {
  display: flex;
  flex-direction: column;
  align-items: center;
  gap: 4px;
  padding-top: 3px;
  line-height: 14px;
}
.g-print .big { width: 43px; }
.big.on {
  width: 42px;
  height: 66px;
  margin: 1px 3px 0;
  padding-top: 1px;
  border: 1px solid #8f7b56;
  border-color: #857251 #b58d50 #f5c535;
  border-radius: 2px;
  background: linear-gradient(#dba970, #fdc182 20px, #fba947 26px, #ff9326 27px, #ffc05a 46px, #fff3a6);
}
.stack {
  width: 109px;
  padding: 2px 0 0 6px;
  display: flex;
  flex-direction: column;
  gap: 2px;
}
.small {
  display: flex;
  align-items: center;
  gap: 3px;
  height: 20px;
  white-space: nowrap;
}
.small:disabled { color: #8d8d8d; }
.small input {
  appearance: none;
  flex: none;
  width: 13px;
  height: 13px;
  margin: 0 3px 0 0;
  border: 1px solid #abc1de;
  background: linear-gradient(135deg, #bcc2ca, #f6f6f6) content-box, #f4f7fa;
  padding: 2px;
}
.closeprev {
  flex: 1;
  margin: 6px 0 7px;
  padding: 0;
  border-left: 1px solid #9ebbde;
  box-shadow: inset 1px 0 #f3f8fd;
  gap: 1px;
  white-space: nowrap;
}

/* Preview area */
.preview {
  flex: 1;
  min-height: 0;
  display: grid;
  grid-template: minmax(0, 1fr) 16px / minmax(0, 1fr) 15px;
  margin: 0 1px 1px;
  border: 1px solid #656d7c;
  border-width: 1px 0 0 1px;
  border-bottom: 1px solid #fff;
}
.canvas {
  display: flex;
  justify-content: center;
  padding-left: 4px;
  background: #a3c2ea;
  overflow: hidden;
}
.paper {
  display: flex;
  align-items: flex-start;
  gap: 34px;
  width: 797px;
  padding: 44px 0 0 135px;
  border: solid #000;
  border-width: 0 3px 0 1px;
  background: #fff;
}
.sheet {
  flex: none;
  border: solid #000;
  border-width: 1px 0 0 1px;
  border-spacing: 0;
  table-layout: fixed;
  color: #000;
  font: 14px/17px Lato, sans-serif;
}
.sheet-a { width: 245px; }
.sheet-b { width: 252px; }
.sheet th:first-child { width: 96px; }
.sheet-b th:first-child { width: 103px; }
.sheet th, .sheet td {
  height: 19px;
  padding: 0 2px 1px;
  border: solid #000;
  border-width: 0 1px 1px 0;
  text-align: left;
  font-weight: 400;
  white-space: nowrap;
}
.sheet-b th:first-child, .sheet-b td:first-child { padding-left: 3px; }
/* A printed row is a little over 19px, so every third or so takes one more */
.sheet th,
.sheet tr:nth-child(3n):nth-child(-n+12) td,
.sheet tr:nth-child(3n+2):nth-child(n+14):nth-child(-n+20) td,
.sheet tr:nth-child(3n+1):nth-child(n+22) td { height: 20px; }

.vbar, .hbar { display: flex; align-items: center; }
.vbar {
  flex-direction: column;
  background: linear-gradient(90deg, #9db9df, #7492c0 30%, #7b9ac7);
}
.hbar { background: linear-gradient(#a9c8f0 1px, #7492bd 1px, #7c9cc8); }
.corner { background: #789bcf; }
.vbar::before { content: ""; flex: 584; order: 1; }
.vbar::after { content: ""; flex: 416; order: 3; }
.hbar::before { content: ""; flex: 609; order: 1; }
.hbar::after { content: ""; flex: 391; order: 3; }
.vbar i, .hbar i { border: 4px solid transparent; }
.vbar .up { margin: 2px 0 4px; border-bottom-color: #42506e; }
.vbar .down { order: 4; margin: 4px 0 2px; border-top-color: #42506e; }
.hbar .left { margin: 0 4px 0 1px; border-right-color: #42506e; }
.hbar .right { order: 4; margin: 0 3px 0 4px; border-left-color: #42506e; }
.thumb {
  order: 2;
  display: grid;
  place-items: center;
  border: 1px solid #4d6596;
  border-radius: 2px;
}
.vbar .thumb {
  width: 15px;
  height: 185px;
  background: linear-gradient(90deg, #fff, #e2e7ed 45%, #b6c4d6 50%, #c6d1df 80%, #fff);
}
.hbar .thumb {
  width: 366px;
  height: 15px;
  background: linear-gradient(#fff, #e2e7ed 45%, #b6c4d6 50%, #a9bbd2 90%, #dfe6ee);
}
.vbar b { width: 8px; height: 7px; background: repeating-linear-gradient(#7c8490 0 1px, #0000 1px 2px); }
.hbar b { width: 7px; height: 7px; background: repeating-linear-gradient(90deg, #7c8490 0 1px, #0000 1px 2px); }

/* Status bar */
.status {
  flex: none;
  display: flex;
  height: 22px;
  border-top: 1px solid #567db1;
  background: linear-gradient(#fff 1px, #d7e6f9 1px, #c7dcf8 7px, #b3d0f5 8px, #d7e5f7 19px, #cde0f8);
  line-height: 20px;
}
.status p { width: calc(50% - 2px); padding-left: 7px; }
.status .mid { flex: 1; border-left: 1px solid #8db2e3; box-shadow: inset 1px 0 #fff; }
.zoomer {
  flex: none;
  display: flex;
  align-items: center;
  width: 254px;
  padding: 0 4px 0 10px;
  border-left: 1px solid #5678ad;
  background: linear-gradient(#c3d8f5 1px, #a9c6ee 7px, #84a8de 8px, #6c94cf);
}
.zoomer label { width: 68px; white-space: nowrap; }
.zoomer output { width: 36px; color: #8d8d8d; }
.zoomer input {
  appearance: none;
  flex: 1;
  min-width: 0;
  height: 9px;
  margin: 0;
  background: linear-gradient(#0000 4px, #e3edfa 4px 5px, #0000 5px);
}
.zoomer input::-webkit-slider-thumb { appearance: none; width: 1px; height: 9px; background: #e3edfa; }

/* Taskbar */
.taskbar {
  flex: none;
  display: flex;
  height: 40px;
  border-top: 1px solid #1b1715;
  box-shadow: inset 0 1px #8b8280;
  background: linear-gradient(90deg, #0d0a09 0, #110d0b 35%, #2b211e 36%, #857371 38%, #8d7a78 48%, #8a7775 50%, #3b3327 51.500%, #857270 53.500%, #8c7977 61%, #2a2523 64%, #151211 70%, #1c1816 77%, #3d3431 79%, #4a3f3c 92%, #35302d);
  color: #fff;
  font-size: 12px;
}
.slot {
  flex: none;
  display: grid;
  place-items: center;
  width: 54px;
}
.slot.wide { width: 56px; }
.qt { font: bold 18px "Liberation Serif", serif; fill: #fff; }
.app {
  flex: none;
  display: flex;
  align-items: center;
  gap: 4px;
  width: 88px;
  height: 38px;
  margin: 1px 2px 0;
  padding-left: 5px;
  border: 1px solid #a39e9b;
  border-radius: 3px;
  background: linear-gradient(165deg, #a5a3a2cc, #6b6766cc 36%, #34302fcc 42%, #2b2827cc);
  white-space: nowrap;
}
.app.active { background: linear-gradient(165deg, #d5d5d5, #a5a5a5 38%, #858585 44%, #8f8f8f); }
.pile { display: flex; }
.pile .app { width: 80px; margin-right: 0; padding-left: 4px; }
.pile i {
  width: 4px;
  height: 38px;
  margin-top: 1px;
  border: 1px solid #8f8a87;
  border-left: 0;
  border-radius: 0 3px 3px 0;
}
.pile i:last-child { margin-right: 2px; }
.tray {
  display: flex;
  align-items: center;
  gap: 9px;
  margin-left: auto;
}
.tray button:first-child { margin-right: 5px; }
.tray time { width: 64px; margin-left: 5px; text-align: center; line-height: 17px; }
.tray .desktop {
  width: 15px;
  height: 39px;
  border: 1px solid #8a8380;
  background: linear-gradient(#857d79, #3a332f 50%, #5a524e);
}
```
